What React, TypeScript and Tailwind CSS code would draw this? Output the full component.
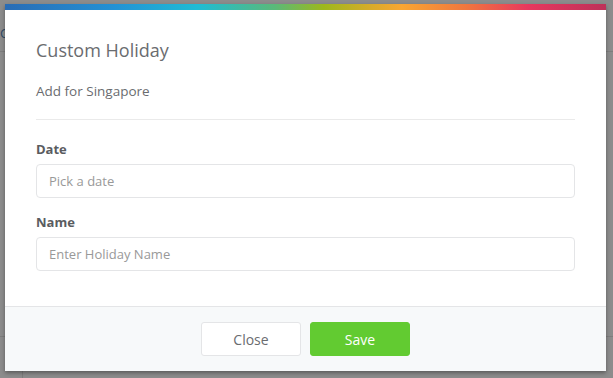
import React from 'react';

const Field = ({ label, placeholder }: { label: string; placeholder: string }) => (
  <div className="flex flex-col">
    <label className="text-[13px] font-bold text-[#5a5c5f] leading-[18px] mb-[6px]">{label}</label>
    <input
      className="h-[34px] w-full rounded-[4px] border border-[#e4e5e7] bg-white px-[12px] text-[13px] text-[#6a6c6f] placeholder:text-[#999] outline-none"
      placeholder={placeholder}
    />
  </div>
);

export default function App() {
  return (
    <div
      className="relative h-screen w-full overflow-hidden bg-[#8c8c8c]"
      style={{ fontFamily: '"Open Sans", "Noto Sans", sans-serif' }}
    >
      {/* faint page behind the overlay */}
      <div className="absolute left-0 top-[24px] text-[13px] text-[#2f4a66]">C</div>
      <div className="absolute left-0 right-0 top-[51px] h-px bg-[#7d7d7d]" />
      <div className="absolute left-0 right-0 top-[336px] h-px bg-[#7d7d7d]" />
      <div className="absolute left-[22px] top-[336px] bottom-0 w-px bg-[#7d7d7d]" />

      <div className="absolute left-[5px] top-[4px] w-[601px] bg-white shadow-[0_2px_4px_rgba(0,0,0,0.35)]">
        <div className="h-[6px] bg-[linear-gradient(to_right,#2a6cb5_0%,#2391d4_18%,#1fbcd5_32%,#5bb978_45%,#9db81c_53%,#d9ab2a_61%,#f9a632_66%,#f0753f_77%,#e8385e_87%,#be3159_100%)]" />
        <div className="px-[31px] pt-[28px]">
          <h4 className="text-[18px] leading-[24px] text-[#6a6c6f]">Custom Holiday</h4>
          <p className="mt-[19px] text-[13.5px] leading-[20px] text-[#6a6c6f]">Add for Singapore</p>
          <div className="mt-[18px] h-px bg-[#eaeaea]" />
        </div>
        <div className="flex flex-col gap-[15px] px-[31px] pt-[20px] pb-[35px]">
          <Field label="Date" placeholder="Pick a date" />
          <Field label="Name" placeholder="Enter Holiday Name" />
        </div>
        <div className="flex justify-center gap-[9px] border-t border-[#e4e5e7] bg-[#f7f9fa] pt-[15px] pb-[15px]">
          <button className="h-[34px] w-[100px] rounded-[3px] border border-[#e4e5e7] bg-white text-[14px] text-[#6a6c6f]">
            Close
          </button>
          <button className="h-[34px] w-[100px] rounded-[3px] border border-[#62cb31] bg-[#62cb31] text-[14px] text-white">
            Save
          </button>
        </div>
      </div>
    </div>
  );
}
